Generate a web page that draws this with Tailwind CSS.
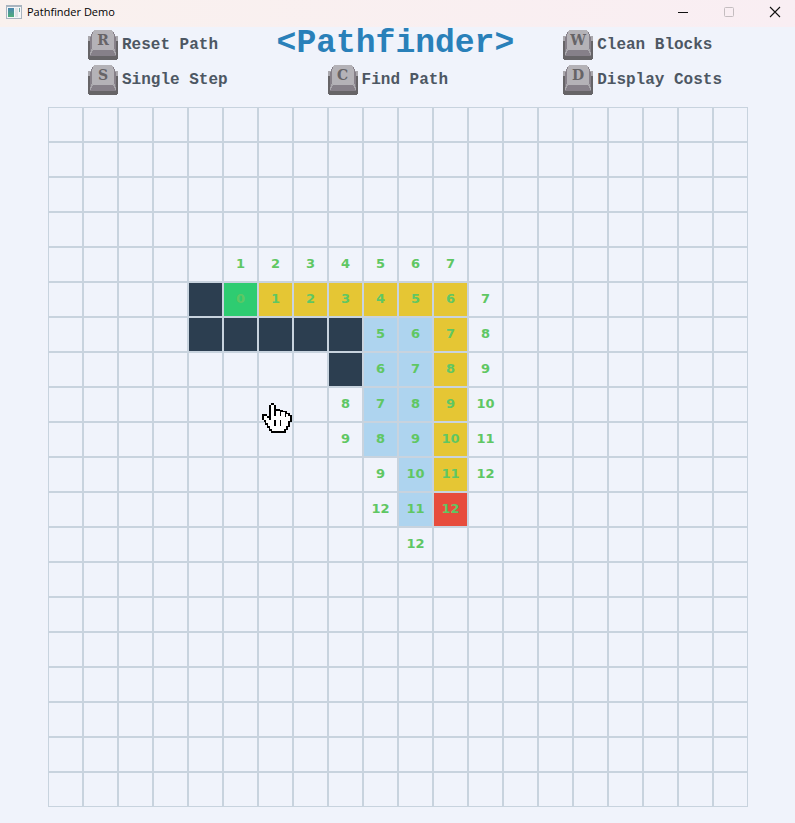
<!DOCTYPE html>
<html lang="en">
<head>
<meta charset="utf-8">
<title>Pathfinder Demo</title>
<script src="https://cdn.jsdelivr.net/npm/@tailwindcss/browser@4"></script>
</head>
<body class="min-h-screen bg-[#f0f3fb] font-['Liberation_Mono','DejaVu_Sans_Mono',monospace]">
<svg class="hidden" aria-hidden="true">
  <symbol id="keycap" viewBox="0 0 30 30">
    <g shape-rendering="crispEdges">
      <path fill="#666467" d="M0 9H30V29H29V30H1V29H0Z"/>
      <path fill="#a9a7ac" d="M0 6H3V11H0ZM27 6H30V11H27Z"/>
      <path fill="#868089" d="M4 2H26V4H27V7H28V26H2V7H3V4H4Z"/>
      <path fill="#b4b2b7" d="M6 0H24V1H25V4H26V19H25V20H5V19H4V4H5V1H6Z"/>
      <path fill="#a9a7ac" d="M3 19H5V21H4V23H3V25H2V22H3ZM25 19H27V22H28V25H27V23H26V21H25Z"/>
    </g>
  </symbol>
</svg>

<header class="flex h-[27px] items-center bg-linear-to-r from-[#f9f1ee] to-[#f9eef3] pl-1.5">
  <svg class="mt-[-4px] h-[14px] w-4" viewBox="0 0 16 14" aria-hidden="true">
    <defs><linearGradient id="pane" x2="0" y2="1"><stop stop-color="#4a86b0"/><stop offset="1" stop-color="#4fae7a"/></linearGradient></defs>
    <path fill="#a9b4bf" d="M0 0H16V14H0Z"/><path fill="#f4f6f7" d="M1 2H15V13H1Z"/>
    <path fill="url(#pane)" d="M2 3H8V12H2Z"/><path fill="#dfe3e6" d="M9 3H12V12H9Z"/><path fill="#6fa9a5" d="M13 3H14V7H13Z"/>
  </svg>
  <span class="mt-[-4px] ml-[5px] font-['Open_Sans','Noto_Sans',sans-serif] text-[11px] leading-4 text-black">Pathfinder Demo</span>
  <div class="mt-[-4px] ml-auto flex h-full items-center gap-[34px] pr-[14px]">
    <button class="grid h-full w-3 place-items-center" aria-label="Minimize"><svg class="size-3" viewBox="0 0 12 12"><path d="M1 6.5H11" stroke="#111" /></svg></button>
    <button class="grid h-full w-3 place-items-center" aria-label="Maximize" disabled><svg class="size-3" viewBox="0 0 12 12"><rect x="1.500" y="1.500" width="9" height="9" rx="1" fill="none" stroke="#c4bdc0"/></svg></button>
    <button class="grid h-full w-3 place-items-center" aria-label="Close"><svg class="size-3" viewBox="0 0 12 12"><path d="M1 1L11 11M11 1L1 11" stroke="#111" stroke-width="1.100"/></svg></button>
  </div>
</header>

<main>
  <section class="flex h-20 justify-between pt-[3px] pr-[73px] pl-[88px] text-[16px] font-bold text-[#4d5763]">
    <div class="flex flex-col gap-[5px]">
      <button class="flex h-[30px] items-center gap-1 whitespace-nowrap"><span class="grid size-[30px]"><svg class="col-start-1 row-start-1 size-[30px]" aria-hidden="true"><use href="#keycap"/></svg><kbd class="col-start-1 row-start-1 pt-0.5 text-center font-['DejaVu_Serif',serif] text-[14px] leading-4 text-[#666467]">R</kbd></span><span class="leading-7">Reset Path</span></button>
      <button class="flex h-[30px] items-center gap-1 whitespace-nowrap"><span class="grid size-[30px]"><svg class="col-start-1 row-start-1 size-[30px]" aria-hidden="true"><use href="#keycap"/></svg><kbd class="col-start-1 row-start-1 pt-0.5 text-center font-['DejaVu_Serif',serif] text-[14px] leading-4 text-[#666467]">S</kbd></span><span class="leading-7">Single Step</span></button>
    </div>
    <div class="flex flex-col gap-[5px]">
      <h1 class="h-[30px] text-[33px] leading-7 whitespace-nowrap text-[#2980b9]">&lt;Pathfinder&gt;</h1>
      <button class="ml-[51px] flex h-[30px] items-center gap-1 whitespace-nowrap"><span class="grid size-[30px]"><svg class="col-start-1 row-start-1 size-[30px]" aria-hidden="true"><use href="#keycap"/></svg><kbd class="col-start-1 row-start-1 pt-0.5 text-center font-['DejaVu_Serif',serif] text-[14px] leading-4 text-[#666467]">C</kbd></span><span class="leading-7">Find Path</span></button>
    </div>
    <div class="flex flex-col gap-[5px]">
      <button class="flex h-[30px] items-center gap-1 whitespace-nowrap"><span class="grid size-[30px]"><svg class="col-start-1 row-start-1 size-[30px]" aria-hidden="true"><use href="#keycap"/></svg><kbd class="col-start-1 row-start-1 pt-0.5 text-center font-['DejaVu_Serif',serif] text-[14px] leading-4 text-[#666467]">W</kbd></span><span class="leading-7">Clean Blocks</span></button>
      <button class="flex h-[30px] items-center gap-1 whitespace-nowrap"><span class="grid size-[30px]"><svg class="col-start-1 row-start-1 size-[30px]" aria-hidden="true"><use href="#keycap"/></svg><kbd class="col-start-1 row-start-1 pt-0.5 text-center font-['DejaVu_Serif',serif] text-[14px] leading-4 text-[#666467]">D</kbd></span><span class="leading-7">Display Costs</span></button>
    </div>
  </section>

  <section class="relative mr-[47px] ml-12 pb-4">
    <div id="board" class="grid grid-cols-[repeat(20,minmax(0,1fr))]"></div>
    <svg class="absolute top-[296px] left-[214px] size-[30px]" viewBox="0 0 30 30" aria-hidden="true" shape-rendering="crispEdges">
      <path fill="#000" d="M9 0H12V2H14V6H18V7H21V8H25V10H28V12H30V19H28V24H26V27H24V30H9V28H7V25H5V22H3V19H2V17H0V11H5V13H7V2H9Z"/>
      <path fill="#fff" d="M9 2H12V13H14V8H18V13H19V9H23V14H24V11H26V13H28V18H26V23H24V26H22V28H10V26H8V23H6V20H4V17H2V13H5V15H7V17H9Z"/>
      <path fill="#000" d="M12 17H14V23H12ZM18 17H19V23H18Z"/>
    </svg>
  </section>
</main>

<script>
  // Cell kinds: w wall, s start, g goal, p path, v visited, o open
  const kinds = {
    w: 'bg-[#2c3e50]', s: 'bg-[#2ecc71]', g: 'bg-[#e74c3c]',
    p: 'bg-[#e5c634]', v: 'bg-[#aed4ef]', o: 'bg-[#f0f3fb]'
  };
  // row -> [first column, cells]
  const rows = {
    4: [5, 'o1 o2 o3 o4 o5 o6 o7'],
    5: [4, 'w s0 p1 p2 p3 p4 p5 p6 o7'],
    6: [4, 'w w w w w v5 v6 p7 o8'],
    7: [8, 'w v6 v7 p8 o9'],
    8: [8, 'o8 v7 v8 p9 o10'],
    9: [8, 'o9 v8 v9 p10 o11'],
    10: [9, 'o9 v10 p11 o12'],
    11: [9, 'o12 v11 g12'],
    12: [10, 'o12']
  };
  const board = document.getElementById('board');
  for (let r = 0; r < 20; r++) {
    const [first, text] = rows[r] || [0, ''];
    const cells = text.split(' ');
    for (let c = 0; c < 20; c++) {
      const item = (c >= first && cells[c - first]) || 'o';
      const cell = document.createElement('div');
      cell.className = "grid aspect-square place-items-center border border-[#c8d3de] pb-px font-['DejaVu_Sans',sans-serif] text-[13px] leading-4 font-bold text-[#5fc763] " + kinds[item[0]];
      cell.textContent = item.slice(1);
      board.append(cell);
    }
  }
</script>
</body>
</html>
